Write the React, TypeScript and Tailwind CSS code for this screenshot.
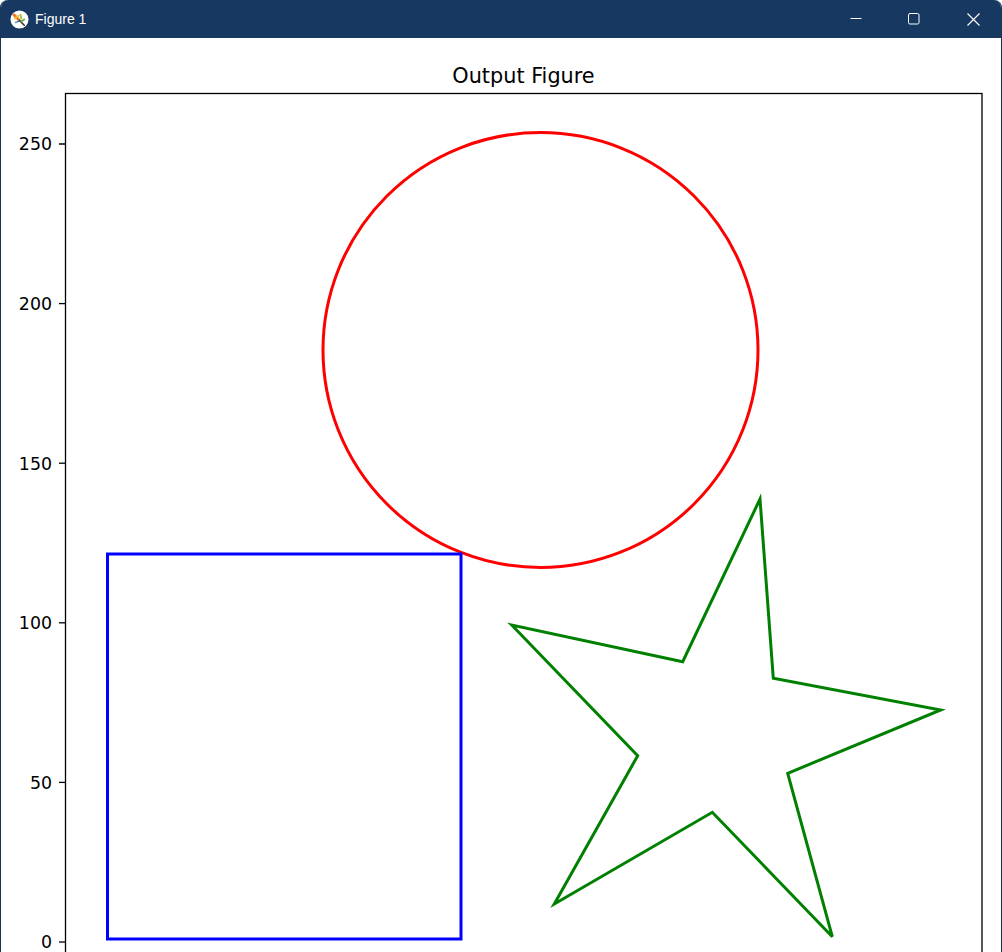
import React from "react";

const Y = (v: number) => 942 - v * 3.192;

function MplIcon() {
  return (
    <svg width="19" height="19" viewBox="0 0 20 20">
      <circle cx="10" cy="10" r="9.5" fill="#ffffff" />
      <path d="M4 5 L10 11" stroke="#e8772a" strokeWidth="3" strokeLinecap="round" />
      <path d="M5 9 L9 6" stroke="#f2c12e" strokeWidth="2" strokeLinecap="round" />
      <path d="M11 5 L12 9" stroke="#9bc53d" strokeWidth="2" strokeLinecap="round" />
      <path d="M10 11 L15 16" stroke="#333333" strokeWidth="1.6" strokeLinecap="round" />
      <path d="M12 12 L15 10" stroke="#6ab04c" strokeWidth="2" strokeLinecap="round" />
      <path d="M6 13 L9 12" stroke="#3d7dca" strokeWidth="1.6" strokeLinecap="round" />
    </svg>
  );
}

export default function App() {
  const ticks = [0, 50, 100, 150, 200, 250];
  const star = [
    [760, 499],
    [773.3, 678.3],
    [940.7, 710],
    [787.7, 773.3],
    [832.3, 936.7],
    [712.3, 812.3],
    [554.3, 904],
    [637.7, 755.7],
    [511.7, 625],
    [682.7, 661.7],
  ];
  return (
    <div className="w-[1002px] h-[952px] overflow-hidden bg-[#0f2238] rounded-t-[8px]">
      <div className="flex flex-col w-full h-full border-x border-[#1b3556] bg-white rounded-t-[8px] overflow-hidden">
        <div className="h-[38px] shrink-0 bg-[#173861] flex items-center text-white">
          <div className="ml-[9px] mr-[6px] flex items-center">
            <MplIcon />
          </div>
          <span className="text-[14px] font-['Segoe_UI','Liberation_Sans',sans-serif] leading-none mt-[-1px]">
            Figure 1
          </span>
          <div className="ml-auto flex h-full">
            <div className="w-[58px] h-full flex items-center justify-center">
              <svg width="12" height="12" viewBox="0 0 12 12">
                <path d="M0.5 5.5 H11.5" stroke="#ffffff" strokeWidth="1" />
              </svg>
            </div>
            <div className="w-[58px] h-full flex items-center justify-center">
              <svg width="12" height="12" viewBox="0 0 12 12">
                <rect x="0.5" y="0.5" width="10.5" height="10.5" rx="1.5" fill="none" stroke="#ffffff" strokeWidth="1" />
              </svg>
            </div>
            <div className="w-[58px] h-full flex items-center justify-center pl-[2px]">
              <svg width="13" height="13" viewBox="0 0 13 13">
                <path d="M0.5 0.5 L12.5 12.5 M12.5 0.5 L0.5 12.5" stroke="#ffffff" strokeWidth="1.1" />
              </svg>
            </div>
          </div>
        </div>
        <div className="flex-1 bg-white">
          <svg width="1000" height="914" viewBox="1 38 1000 914" className="block font-['DejaVu_Sans',sans-serif]">
            <text x="523.5" y="82.5" textAnchor="middle" fontSize="20.8" fill="#000000" fontFamily="DejaVu Sans, sans-serif">
              Output Figure
            </text>
            <rect x="65.5" y="93.5" width="916.5" height="900" fill="none" stroke="#000000" strokeWidth="1.3" />
            {ticks.map((t) => (
              <g key={t}>
                <line x1="59" x2="65.5" y1={Y(t)} y2={Y(t)} stroke="#000000" strokeWidth="1.3" />
                <text
                  x="52"
                  y={Y(t) + 6.4}
                  textAnchor="end"
                  fontSize="17.36"
                  fill="#000000"
                  fontFamily="DejaVu Sans, sans-serif"
                >
                  {t}
                </text>
              </g>
            ))}
            <circle cx="540.5" cy="350" r="217.5" fill="none" stroke="#ff0000" strokeWidth="3" />
            <rect x="107.5" y="554" width="353.5" height="385" fill="none" stroke="#0000ff" strokeWidth="3" />
            <polygon
              points={star.map((p) => p.join(",")).join(" ")}
              fill="none"
              stroke="#008000"
              strokeWidth="3"
              strokeLinejoin="miter"
            />
          </svg>
        </div>
      </div>
    </div>
  );
}
